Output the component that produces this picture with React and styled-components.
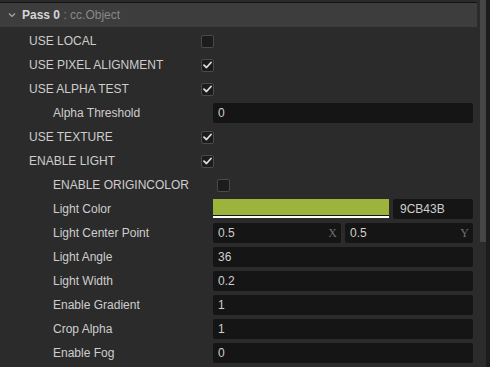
import React from "react";
import styled, { createGlobalStyle } from "styled-components";

const Global = createGlobalStyle`
  html, body { margin: 0; padding: 0; background: #2b2b2b; overflow: hidden; }
  body { font-family: "Liberation Sans", Arial, sans-serif; font-size: 12px; }
`;

const Page = styled.div`
  display: flex;
  width: 490px;
  height: 367px;
  background: #2b2b2b;
  overflow: hidden;
`;

const Main = styled.div`
  flex: 0 0 477px;
  padding-top: 2px;
  display: flex;
  flex-direction: column;
`;

const Header = styled.div`
  height: 24px;
  border-top: 1px solid #121212;
  background: #3d3d3d;
  display: flex;
  align-items: center;
  padding-left: 8px;
  gap: 6px;
  color: #888;
  font-size: 12px;
`;

const Title = styled.span`
  color: #d6d6d6;
  font-weight: bold;
`;

const Rows = styled.div`
  display: flex;
  flex-direction: column;
  padding: 2px 4px 0 0;
`;

const Row = styled.div`
  height: 24px;
  display: flex;
  align-items: center;
`;

const Label = styled.div`
  box-sizing: border-box;
  flex: 0 0 ${(p) => (p.$sub ? 213 : 197)}px;
  padding-left: ${(p) => (p.$sub ? 53 : 29)}px;
  color: #cecece;
  white-space: nowrap;
`;

const Value = styled.div`
  flex: 1;
  display: flex;
  gap: 4px;
  min-width: 0;
`;

const Box = styled.div`
  box-sizing: border-box;
  width: 13px;
  height: 13px;
  margin-left: 4px;
  background: #1c1c1c;
  border: 1px solid #4a4a4a;
  border-radius: 2px;
  display: flex;
  align-items: center;
  justify-content: center;
`;

const Input = styled.div`
  box-sizing: border-box;
  flex: 1;
  height: 20px;
  background: #151515;
  border-radius: 2px;
  padding: 0 ${(p) => (p.$pr ? 4 : 5)}px 0 ${(p) => p.$pl || 5}px;
  display: flex;
  align-items: center;
  justify-content: space-between;
  color: #cfcfcf;
  font-size: 12px;
`;

const Axis = styled.span`
  font-family: "Liberation Serif", "DejaVu Serif", serif;
  color: #6f6f6f;
  font-size: 12px;
`;

const Swatch = styled.div`
  flex: 0 0 176px;
  height: 20px;
  display: flex;
  flex-direction: column;
`;

const SwatchColor = styled.div`
  height: 16px;
  background: ${(p) => p.$c};
  border-bottom: 1.5px solid #141414;
`;

const SwatchAlpha = styled.div`
  height: 2px;
  background: #ffffff;
`;

const Scroll = styled.div`
  flex: 0 0 9px;
  display: flex;
  padding-left: 3px;
  box-sizing: border-box;
`;

const Track = styled.div`
  width: 6px;
`;

const Thumb = styled.div`
  height: 242px;
  background: #464646;
`;

const Edge = styled.div`
  flex: 0 0 4px;
  background: #1c1c1c;
`;

const Check = () => (
  <svg width="9" height="8" viewBox="0 0 9 8">
    <polyline points="1,4.2 3.5,6.5 8,1.5" fill="none" stroke="#dcdcdc" strokeWidth="1.8" strokeLinecap="round" strokeLinejoin="round" />
  </svg>
);

const Chevron = () => (
  <svg width="8" height="6" viewBox="0 0 8 6">
    <polyline points="1,1.5 4,4.5 7,1.5" fill="none" stroke="#a8a8a8" strokeWidth="1.2" />
  </svg>
);

const rows = [
  { label: "USE LOCAL", type: "bool", v: false },
  { label: "USE PIXEL ALIGNMENT", type: "bool", v: true },
  { label: "USE ALPHA TEST", type: "bool", v: true },
  { label: "Alpha Threshold", sub: true, type: "num", v: "0" },
  { label: "USE TEXTURE", type: "bool", v: true },
  { label: "ENABLE LIGHT", type: "bool", v: true },
  { label: "ENABLE ORIGINCOLOR", sub: true, type: "bool", v: false },
  { label: "Light Color", sub: true, type: "color", v: "#9CB43B" },
  { label: "Light Center Point", sub: true, type: "vec2", v: ["0.5", "0.5"] },
  { label: "Light Angle", sub: true, type: "num", v: "36" },
  { label: "Light Width", sub: true, type: "num", v: "0.2" },
  { label: "Enable Gradient", sub: true, type: "num", v: "1" },
  { label: "Crop Alpha", sub: true, type: "num", v: "1" },
  { label: "Enable Fog", sub: true, type: "num", v: "0" },
];

const renderValue = (r) => {
  switch (r.type) {
    case "bool":
      return <Box>{r.v && <Check />}</Box>;
    case "num":
      return <Input>{r.v}</Input>;
    case "color":
      return (
        <>
          <Swatch>
            <SwatchColor $c={r.v} />
            <SwatchAlpha />
          </Swatch>
          <Input $pl={7}>{r.v.slice(1)}</Input>
        </>
      );
    case "vec2":
      return (
        <>
          <Input $pr>
            {r.v[0]}
            <Axis>X</Axis>
          </Input>
          <Input $pr>
            {r.v[1]}
            <Axis>Y</Axis>
          </Input>
        </>
      );
    default:
      return null;
  }
};

export default function App() {
  return (
    <Page>
      <Global />
      <Main>
        <Header>
          <Chevron />
          <span>
            <Title>Pass 0</Title> : cc.Object
          </span>
        </Header>
        <Rows>
          {rows.map((r) => (
            <Row key={r.label}>
              <Label $sub={r.sub}>{r.label}</Label>
              <Value>{renderValue(r)}</Value>
            </Row>
          ))}
        </Rows>
      </Main>
      <Scroll>
        <Track>
          <Thumb />
        </Track>
      </Scroll>
      <Edge />
    </Page>
  );
}
